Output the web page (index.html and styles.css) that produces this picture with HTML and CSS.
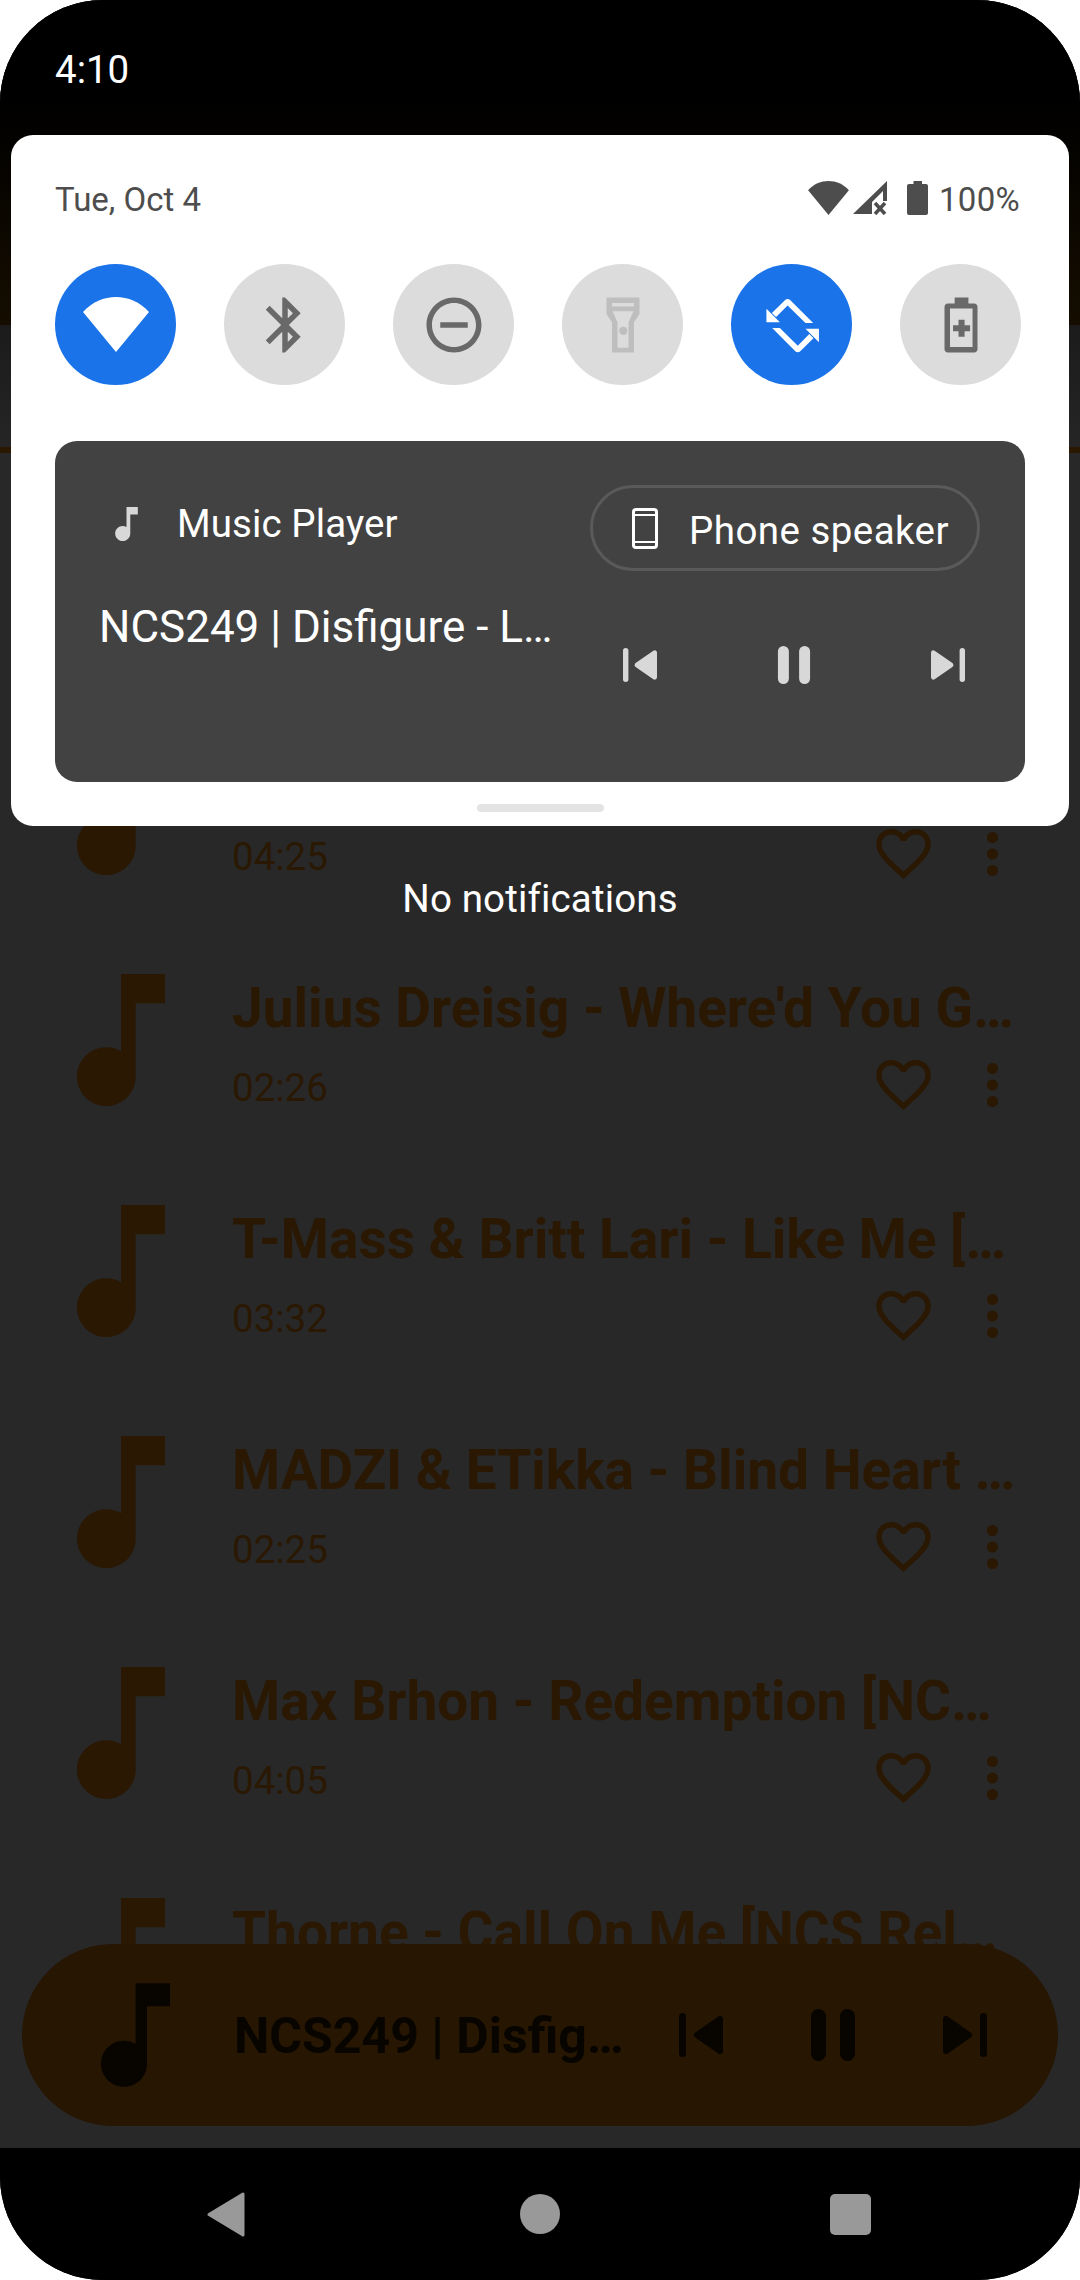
FILE: index.html
```html
<!DOCTYPE html>
<html lang="en">
<head>
    <meta charset="UTF-8">
    <meta name="viewport" content="width=device-width, initial-scale=1.0">
    <title>Music Player - Quick Settings</title>
    <link rel="stylesheet" href="styles.css">
</head>
<body>

<svg class="defs" width="0" height="0">
    <symbol id="note" viewBox="6 3 12 18"><path d="M12 3v10.55c-.59-.34-1.27-.55-2-.55-2.21 0-4 1.79-4 4s1.79 4 4 4 4-1.79 4-4V7h4V3h-6z"/></symbol>
    <symbol id="heart" viewBox="2 3 20 18.35"><path d="M16.5 3c-1.74 0-3.41.81-4.5 2.09C10.91 3.81 9.24 3 7.5 3 4.42 3 2 5.42 2 8.5c0 3.78 3.4 6.86 8.55 11.54L12 21.35l1.45-1.32C18.6 15.36 22 12.28 22 8.5 22 5.42 19.58 3 16.5 3zm-4.4 15.55l-.1.1-.1-.1C7.14 14.24 4 11.39 4 8.5 4 6.5 5.5 5 7.5 5c1.54 0 3.04.99 3.57 2.36h1.87C13.46 5.99 14.96 5 16.5 5c2 0 3.5 1.5 3.5 3.5 0 2.89-3.14 5.74-7.9 10.05z"/></symbol>
    <symbol id="dots" viewBox="0 0 11 44"><circle cx="5.5" cy="5.5" r="5.5"/><circle cx="5.5" cy="22" r="5.5"/><circle cx="5.5" cy="38.5" r="5.5"/></symbol>
    <symbol id="prev" viewBox="0 0 44 44"><rect width="7" height="44" rx="3.5"/><path d="M18 22 41 6v32z" stroke="currentColor" stroke-width="6" stroke-linejoin="round"/></symbol>
    <symbol id="next" viewBox="0 0 44 44"><rect x="37" width="7" height="44" rx="3.5"/><path d="M26 22 3 6v32z" stroke="currentColor" stroke-width="6" stroke-linejoin="round"/></symbol>
    <symbol id="pause" viewBox="0 0 44 52"><rect width="15" height="52" rx="7.5"/><rect x="29" width="15" height="52" rx="7.5"/></symbol>
    <symbol id="wedge" viewBox="0 0 66 55"><path d="M0 15C18-5 48-5 66 15L33 55z"/></symbol>
</svg>

<div class="screen">
    <div class="app">
        <div class="app-status">4:10</div>
        <div class="app-tabs"></div>
        <div class="app-line"></div>

        <div class="song-list">
            <div class="song">
                <svg class="song-note"><use href="#note"/></svg>
                <div class="song-body">
                    <div class="song-title">NCS249 | Disfigure - L…</div>
                    <div class="song-meta">
                        <span class="song-time">04:25</span>
                        <div class="song-actions">
                            <svg class="heart"><use href="#heart"/></svg>
                            <svg class="dots"><use href="#dots"/></svg>
                        </div>
                    </div>
                </div>
            </div>
            <div class="song">
                <svg class="song-note"><use href="#note"/></svg>
                <div class="song-body">
                    <div class="song-title">Julius Dreisig - Where'd You G…</div>
                    <div class="song-meta">
                        <span class="song-time">02:26</span>
                        <div class="song-actions">
                            <svg class="heart"><use href="#heart"/></svg>
                            <svg class="dots"><use href="#dots"/></svg>
                        </div>
                    </div>
                </div>
            </div>
            <div class="song">
                <svg class="song-note"><use href="#note"/></svg>
                <div class="song-body">
                    <div class="song-title">T-Mass &amp; Britt Lari - Like Me […</div>
                    <div class="song-meta">
                        <span class="song-time">03:32</span>
                        <div class="song-actions">
                            <svg class="heart"><use href="#heart"/></svg>
                            <svg class="dots"><use href="#dots"/></svg>
                        </div>
                    </div>
                </div>
            </div>
            <div class="song">
                <svg class="song-note"><use href="#note"/></svg>
                <div class="song-body">
                    <div class="song-title">MADZI &amp; ETikka - Blind Heart …</div>
                    <div class="song-meta">
                        <span class="song-time">02:25</span>
                        <div class="song-actions">
                            <svg class="heart"><use href="#heart"/></svg>
                            <svg class="dots"><use href="#dots"/></svg>
                        </div>
                    </div>
                </div>
            </div>
            <div class="song">
                <svg class="song-note"><use href="#note"/></svg>
                <div class="song-body">
                    <div class="song-title">Max Brhon - Redemption [NC…</div>
                    <div class="song-meta">
                        <span class="song-time">04:05</span>
                        <div class="song-actions">
                            <svg class="heart"><use href="#heart"/></svg>
                            <svg class="dots"><use href="#dots"/></svg>
                        </div>
                    </div>
                </div>
            </div>
            <div class="song">
                <svg class="song-note"><use href="#note"/></svg>
                <div class="song-body">
                    <div class="song-title">Thorne - Call On Me [NCS Rel…</div>
                </div>
            </div>
        </div>

        <div class="no-notifications">No notifications</div>

        <div class="mini-player">
            <svg class="mini-note"><use href="#note"/></svg>
            <div class="mini-title">NCS249 | Disfig…</div>
            <svg class="mini-skip"><use href="#prev"/></svg>
            <svg class="mini-pause"><use href="#pause"/></svg>
            <svg class="mini-skip"><use href="#next"/></svg>
        </div>

        <!-- quick settings shade, sits over the app -->
        <div class="panel">
            <div class="panel-header">
                <span class="panel-date">Tue, Oct 4</span>
                <div class="panel-status">
                    <svg class="status-wifi"><use href="#wedge"/></svg>
                    <svg class="status-signal" viewBox="0 0 34 34">
                        <path d="M0 33 34 0v20h-4V10L19 21v12z"/>
                        <path d="M22 22l10 11M32 22L22 33" fill="none" stroke="#4d4d4d" stroke-width="3.500"/>
                    </svg>
                    <svg class="status-battery" viewBox="0 0 21 34">
                        <path d="M6.500 0h8.500v3h4c1.100 0 2 .9 2 2v27c0 1.100-.9 2-2 2H2c-1.100 0-2-.9-2-2V5c0-1.100.9-2 2-2h4.500z"/>
                    </svg>
                    <span class="panel-battery">100%</span>
                </div>
            </div>

            <div class="tiles">
                <div class="tile tile-on">
                    <svg class="tile-wifi"><use href="#wedge"/></svg>
                </div>
                <div class="tile">
                    <svg class="tile-icon" viewBox="0 0 24 24"><path d="M17.71 7.71L12 2h-1v7.59L6.41 5 5 6.41 10.59 12 5 17.59 6.41 19 11 14.41V22h1l5.71-5.71-4.3-4.29 4.3-4.29zM13 5.830l1.880 1.880L13 9.590V5.830zm1.880 10.460L13 18.170v-3.760l1.880 1.880z"/></svg>
                </div>
                <div class="tile">
                    <svg class="tile-icon" viewBox="0 0 24 24"><path d="M12 2C6.480 2 2 6.480 2 12s4.480 10 10 10 10-4.480 10-10S17.520 2 12 2zm0 18c-4.410 0-8-3.590-8-8s3.590-8 8-8 8 3.590 8 8-3.590 8-8 8zM7 11h10v2H7z"/></svg>
                </div>
                <div class="tile">
                    <svg class="tile-icon tile-icon-off" viewBox="0 0 24 24">
                        <path fill-rule="evenodd" d="M6 2h12v6l-2 3v11H8V11L6 8V2zM8 4v1.300h8V4H8zM8.200 7 10 11v9.300h4V11l1.800-4H8.200z"/>
                        <circle cx="12.100" cy="14.100" r="1.500"/>
                    </svg>
                </div>
                <div class="tile tile-on">
                    <svg class="tile-icon tile-icon-on" viewBox="0 0 24 24">
                        <path d="M2.700 6.100V11h4.900zM19.700 11.300h-2.800L10.400 4.900 6.200 9.100 4.700 7.600 9.500 2.900c.5-.5 1.300-.5 1.800 0z"/>
                        <path transform="rotate(180 12.250 12.200)" d="M2.700 6.100V11h4.900zM19.700 11.300h-2.800L10.400 4.900 6.200 9.100 4.700 7.600 9.500 2.900c.5-.5 1.300-.5 1.800 0z"/>
                    </svg>
                </div>
                <div class="tile">
                    <svg class="tile-icon" viewBox="0 0 24 24">
                        <path fill-rule="evenodd" d="M9.700 2h5v2.200h2.100c.7 0 1.200.5 1.200 1.200v15.400c0 .7-.5 1.200-1.200 1.200H7.200c-.7 0-1.200-.5-1.200-1.200V5.400c0-.7.5-1.200 1.200-1.200h2.500zM8 6v14h8.200V6z"/>
                        <path d="M11.100 10.100h2.200v2h2v2.200h-2v2h-2.200v-2h-2v-2.200h2z"/>
                    </svg>
                </div>
            </div>

            <div class="media">
                <div class="media-top">
                    <div class="media-app">
                        <svg class="media-note"><use href="#note"/></svg>
                        <span>Music Player</span>
                    </div>
                    <div class="media-chip">
                        <svg class="chip-phone" viewBox="0 0 26 41">
                            <rect x="1.500" y="1.500" width="23" height="38" rx="2.500" fill="none" stroke="#fff" stroke-width="3"/>
                            <path d="M1.500 7h23M1.500 34h23" stroke="#fff" stroke-width="2"/>
                        </svg>
                        <span class="chip-label">Phone speaker</span>
                    </div>
                </div>
                <div class="media-bottom">
                    <div class="media-title">NCS249 | Disfigure - L…</div>
                    <div class="media-controls">
                        <svg class="media-skip"><use href="#prev"/></svg>
                        <svg class="media-pause"><use href="#pause"/></svg>
                        <svg class="media-skip"><use href="#next"/></svg>
                    </div>
                </div>
            </div>

            <div class="panel-handle"></div>
        </div>
    </div>

    <div class="nav">
        <svg class="nav-back" viewBox="0 0 38 45"><path d="M2 22.500 36 2v41z" stroke="#999" stroke-width="3" stroke-linejoin="round"/></svg>
        <div class="nav-home"></div>
        <div class="nav-recent"></div>
    </div>
</div>

</body>
</html>
```

FILE: styles.css
```css
* {
    box-sizing: border-box;
}
body {
    margin: 0;
    background: white;
    font-family: Roboto, "Liberation Sans", sans-serif;
}
svg {
    display: block;
    flex: none;
    fill: currentColor;
}
.defs {
    position: absolute;
}
.screen {
    width: 1080px;
    height: 2280px;
    border-radius: 103px;
    overflow: hidden;
    background: black;
    display: flex;
    flex-direction: column;
}

/* app behind the shade */
.app {
    position: relative;
    height: 2148px;
    overflow: hidden;
    background: #282828;
}
.app-status {
    height: 325px;
    padding: 47px 0 0 55px;
    color: white;
    font-size: 38.5px;
    line-height: 45px;
    background: linear-gradient(#000 100px, #150d00 100%);
}
.app-tabs {
    height: 122px;
    background: linear-gradient(#1b1b1b, #252525);
}
.app-line {
    height: 6px;
    background: #2a1803;
}
.song-list {
    padding-top: 250px;
    color: #2a1803;
}
.song {
    display: flex;
    height: 231px;
    padding: 40px 63px 0 77px;
}
.song-note {
    width: 88px;
    height: 132px;
}
.song-body {
    flex: 1;
    min-width: 0;
    margin-left: 67px;
    padding-top: 2px;
}
.song-title {
    font-size: 55px;
    font-weight: bold;
    line-height: 64px;
    white-space: nowrap;
}
.song-meta {
    display: flex;
    margin-top: 20px;
}
.song-time {
    margin-top: 5px;
    font-size: 38.5px;
    line-height: 45px;
}
.song-actions {
    display: flex;
    gap: 56px;
    margin: 0 19px 0 auto;
}
.heart {
    width: 55px;
    height: 50px;
}
.dots {
    width: 11px;
    height: 44px;
    margin-top: 3px;
}
.no-notifications {
    position: absolute;
    top: 876px;
    left: 0;
    right: 0;
    color: white;
    font-size: 38.5px;
    line-height: 45px;
    letter-spacing: .15px;
    text-align: center;
}

/* mini player */
.mini-player {
    position: absolute;
    left: 22px;
    right: 22px;
    top: 1944px;
    height: 182px;
    display: flex;
    align-items: center;
    border-radius: 91px;
    background: #261602;
    color: #080500;
}
.mini-note {
    width: 69px;
    height: 104px;
    margin-left: 79px;
}
.mini-title {
    width: 445px;
    margin-left: 64px;
    padding-top: 2px;
    font-size: 50px;
    font-weight: bold;
    white-space: nowrap;
}
.mini-skip {
    width: 44px;
    height: 44px;
}
.mini-pause {
    width: 44px;
    height: 52px;
    margin: 0 88px;
}

/* quick settings shade */
.panel {
    position: absolute;
    top: 135px;
    left: 11px;
    width: 1058px;
    height: 691px;
    padding: 46px 44px 0;
    border-radius: 22px;
    background: white;
}
.panel-header {
    display: flex;
    justify-content: space-between;
    align-items: center;
    height: 34px;
    padding-right: 5px;
    color: #4d4d4d;
    font-size: 33px;
}
.panel-date {
    padding-top: 3px;
}
.panel-status {
    display: flex;
    align-items: center;
}
.status-wifi {
    width: 41px;
    height: 34px;
}
.status-signal {
    width: 34px;
    height: 34px;
    margin-left: 4px;
}
.status-battery {
    width: 21px;
    height: 34px;
    margin-left: 20px;
}
.panel-battery {
    margin-left: 11px;
    padding-top: 3px;
    letter-spacing: .3px;
}
.tiles {
    display: flex;
    gap: 48px;
    margin-top: 49px;
}
.tile {
    display: flex;
    align-items: center;
    justify-content: center;
    width: 121px;
    height: 121px;
    border-radius: 50%;
    background: #dcdcdc;
    color: #696969;
}
.tile-on {
    background: #1a73e8;
    color: white;
}
.tile-wifi {
    width: 66px;
    height: 55px;
}
.tile-icon {
    width: 66px;
    height: 66px;
}
.tile-icon-off {
    color: #bebebe;
}
.media {
    height: 341px;
    margin: 56px 0 0;
    border-radius: 22px;
    background: #424242;
    color: white;
}
.media-top {
    display: flex;
    justify-content: space-between;
    align-items: flex-start;
    padding: 44px 45px 0 60px;
}
.media-app {
    display: flex;
    align-items: center;
    margin-top: 16px;
    font-size: 38.5px;
    line-height: 45px;
    letter-spacing: .1px;
}
.media-note {
    width: 23px;
    height: 34px;
    color: #d8d8d8;
    margin-right: 39px;
}
.media-chip {
    display: flex;
    align-items: center;
    width: 390px;
    height: 86px;
    padding-left: 39px;
    border: 3px solid #5a5a5a;
    border-radius: 43px;
    font-size: 38.5px;
}
.chip-phone {
    width: 26px;
    height: 41px;
    margin-right: 31px;
}
.chip-label {
    padding-top: 4px;
    letter-spacing: .45px;
}
.media-bottom {
    display: flex;
    justify-content: space-between;
    align-items: flex-start;
    padding: 30px 60px 0 44px;
}
.media-title {
    font-size: 44px;
    line-height: 52px;
    white-space: nowrap;
}
.media-controls {
    display: flex;
    align-items: center;
    gap: 120px;
    margin-top: 45px;
    color: #d8d8d8;
}
.media-skip {
    width: 34px;
    height: 34px;
}
.media-pause {
    width: 34px;
    height: 38px;
}
.panel-handle {
    width: 127px;
    height: 8px;
    margin: 22px auto 0;
    border-radius: 4px;
    background: #e4e4e4;
}

/* navigation bar */
.nav {
    flex: 1;
    display: flex;
    align-items: center;
    padding-left: 207px;
    background: black;
}
.nav-back {
    width: 38px;
    height: 45px;
    margin-right: 275px;
}
.nav-back path {
    fill: #999;
}
.nav-home {
    width: 40px;
    height: 40px;
    margin-right: 270px;
    border-radius: 50%;
    background: #999;
}
.nav-recent {
    width: 41px;
    height: 41px;
    border-radius: 5px;
    background: #999;
}
```
